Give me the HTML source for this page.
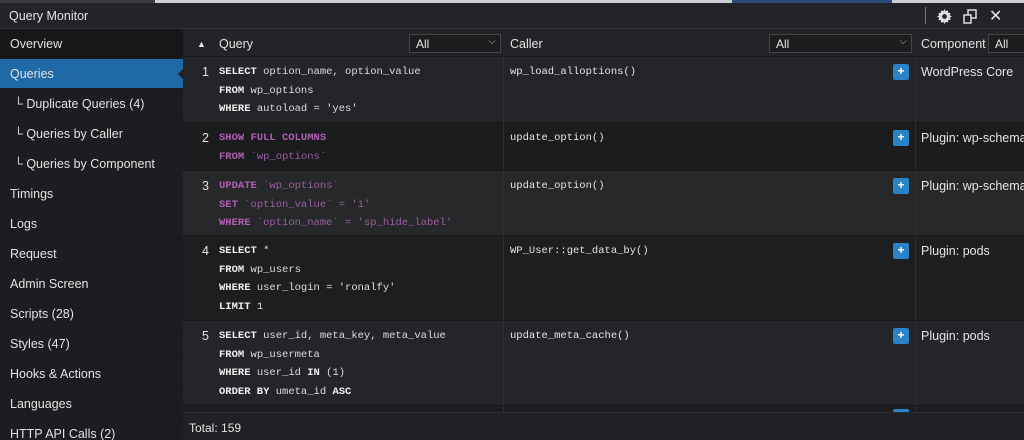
<!DOCTYPE html>
<html><head><style>
*{box-sizing:border-box;margin:0;padding:0}
html,body{width:1024px;height:440px;overflow:hidden}
body{background:#1e1f21;font-family:"Liberation Sans",sans-serif;color:#e4e4e4;font-size:12px;position:relative}
.top{position:absolute;left:0;top:0;width:1024px;height:4px;background:#3a3b3e}
.top em{position:absolute;left:155px;top:0;width:869px;height:3px;background:#cfd0d2}
.top i{position:absolute;left:732px;top:0;width:160px;height:3px;background:#2a4a78}
.title{position:absolute;top:3px;left:0;width:1024px;height:26px;background:#232427;border-bottom:1px solid #333;}
.title span{position:absolute;left:9px;top:6px;font-size:12.5px}
.side{position:absolute;left:0;top:29px;width:183px;height:411px;background:#1c1d20;overflow:hidden}
.side div{height:30px;line-height:30px;padding-left:10px;border-bottom:1px solid #18191b;font-size:12.5px;color:#e2e2e2}
.side .sub{padding-left:14px}
.side .ov{background:#161719}
.side .act{background:#1f6aa6;position:relative}
.side .act:after{content:"";position:absolute;right:0;top:10px;border:5px solid transparent;border-right-color:#1e1f21}
.main{position:absolute;left:183px;top:29px;width:841px;height:411px;overflow:hidden}
.hdr{position:absolute;top:0;left:0;width:841px;height:28px;background:#232427;border-bottom:1px solid #1a1a1a}
.hdr span{position:absolute;top:8px;font-size:12.5px}
.sel{position:absolute;top:5px;height:19px;border:1px solid #444;background:#1c1d1f;font-size:12px;padding:2px 6px}
.sel b{position:absolute;right:4px;top:1px;font-weight:normal;font-size:10px;color:#aaa}
.row{position:absolute;left:0;width:841px;font-family:"Liberation Mono",monospace;font-size:10.5px;line-height:18.5px;border-bottom:1px solid #1a1a1a}
.row .n{position:absolute;left:8px;width:18px;text-align:right;top:6px;font-family:"Liberation Sans";font-size:12.5px}
.row .q{position:absolute;left:36px;top:6px;white-space:pre;color:#ddd}
.row .c{position:absolute;left:327px;top:6px}
.row .p{position:absolute;left:710px;top:7px;width:16px;height:16px;background:#2a83c6;border-radius:2px;color:#fff;text-align:center;line-height:15px;font-family:"Liberation Sans";font-weight:bold;font-size:12px}
.row .cp{position:absolute;left:738px;top:6px;font-family:"Liberation Sans";font-size:12.5px;white-space:nowrap}
.row .v1{position:absolute;left:320px;top:0;bottom:0;border-left:1px solid #2e2f31}
.row .v2{position:absolute;left:732px;top:0;bottom:0;border-left:1px solid #2e2f31}
.k{font-weight:bold;color:#f0f0f0}
.m{color:#b05fb3;font-weight:bold}.mm{color:#9a5f9e}
.foot{position:absolute;left:0;top:383px;width:841px;height:28px;background:#202124;border-top:1px solid #2d2d2d}
.foot span{position:absolute;left:6px;top:8px;font-size:12px}
</style></head><body>
<div class="top"><em></em><i></i></div>
<div class="title"><span>Query Monitor</span>
<div style="position:absolute;left:925px;top:4px;width:1px;height:17px;background:#777"></div>
<svg style="position:absolute;left:937px;top:6px" width="15" height="15" viewBox="0 0 16 16"><path fill="#ddd" d="M8 0l1.2 2.2 2.4-.7.3 2.5 2.5.3-.7 2.4L16 8l-2.2 1.2.7 2.4-2.5.3-.3 2.5-2.4-.7L8 16l-1.2-2.2-2.4.7-.3-2.5-2.5-.3.7-2.4L0 8l2.2-1.2-.7-2.4 2.5-.3.3-2.5 2.4.7z"/><circle cx="8" cy="8" r="2.5" fill="#232427"/></svg>
<svg style="position:absolute;left:963px;top:6px" width="14" height="15" viewBox="0 0 14 15" fill="none" stroke="#ddd" stroke-width="1.5"><rect x="1" y="6" width="7" height="8"/><path d="M5 6V1h8v8H8"/></svg>
<span style="left:989px;top:3px;font-size:16px">✕</span>
</div>
<div class="side">
<div class="ov">Overview</div><div class="act">Queries</div>
<div class="sub">└ Duplicate Queries (4)</div><div class="sub">└ Queries by Caller</div><div class="sub">└ Queries by Component</div>
<div>Timings</div><div>Logs</div><div>Request</div><div>Admin Screen</div><div>Scripts (28)</div><div>Styles (47)</div><div>Hooks &amp; Actions</div><div>Languages</div><div>HTTP API Calls (2)</div>
</div>
<div class="main">
<div class="hdr">
<span style="left:14px;font-size:9px;top:10px">▲</span><span style="left:36px">Query</span>
<div class="sel" style="left:226px;width:92px">All<b>⌵</b></div>
<span style="left:327px">Caller</span>
<div class="sel" style="left:586px;width:143px">All<b>⌵</b></div>
<span style="left:738px">Component</span>
<div class="sel" style="left:805px;width:40px">All</div>
</div>
<div class="row" style="top:28px;height:66px;background:#242528"><div class="v1"></div><div class="v2"></div><span class="n">1</span><div class="q"><span class="k">SELECT</span> option_name, option_value
<span class="k">FROM</span> wp_options
<span class="k">WHERE</span> autoload = 'yes'</div><div class="c">wp_load_alloptions()</div><div class="p">+</div><div class="cp">WordPress Core</div></div>
<div class="row" style="top:94px;height:48px;background:#1b1c1e"><div class="v1"></div><div class="v2"></div><span class="n">2</span><div class="q"><span class="m">SHOW FULL COLUMNS</span>
<span class="m">FROM</span> <span class="mm">`wp_options`</span></div><div class="c">update_option()</div><div class="p">+</div><div class="cp">Plugin: wp-schema</div></div>
<div class="row" style="top:142px;height:65px;background:#27282a"><div class="v1"></div><div class="v2"></div><span class="n">3</span><div class="q"><span class="m">UPDATE</span> <span class="mm">`wp_options`</span>
<span class="m">SET</span> <span class="mm">`option_value` = '1'</span>
<span class="m">WHERE</span> <span class="mm">`option_name` = 'sp_hide_label'</span></div><div class="c">update_option()</div><div class="p">+</div><div class="cp">Plugin: wp-schema</div></div>
<div class="row" style="top:207px;height:85px;background:#1d1e20"><div class="v1"></div><div class="v2"></div><span class="n">4</span><div class="q"><span class="k">SELECT</span> *
<span class="k">FROM</span> wp_users
<span class="k">WHERE</span> user_login = 'ronalfy'
<span class="k">LIMIT</span> 1</div><div class="c">WP_User::get_data_by()</div><div class="p">+</div><div class="cp">Plugin: pods</div></div>
<div class="row" style="top:292px;height:85px;background:#242528"><div class="v1"></div><div class="v2"></div><span class="n">5</span><div class="q"><span class="k">SELECT</span> user_id, meta_key, meta_value
<span class="k">FROM</span> wp_usermeta
<span class="k">WHERE</span> user_id <span class="k">IN</span> (1)
<span class="k">ORDER BY</span> umeta_id <span class="k">ASC</span></div><div class="c">update_meta_cache()</div><div class="p">+</div><div class="cp">Plugin: pods</div></div>
<div class="row" style="top:377px;height:8px;background:#1d1e20"><div class="v1"></div><div class="v2"></div><div class="p" style="top:3px"></div></div>
<div class="foot"><span>Total: 159</span></div>
</div>
</body></html>
